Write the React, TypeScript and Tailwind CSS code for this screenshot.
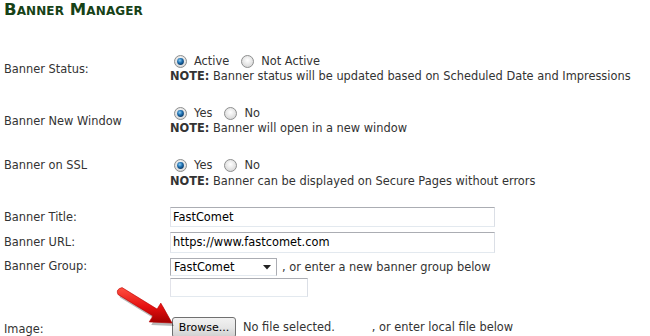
import React from "react";

function Radio({ checked }: { checked?: boolean }) {
  return (
    <svg width="13" height="13" viewBox="0 0 13 13" className="shrink-0">
      <defs>
        <radialGradient id="rbg" cx="50%" cy="40%" r="60%">
          <stop offset="0%" stopColor="#ffffff" />
          <stop offset="100%" stopColor="#d6d6d6" />
        </radialGradient>
        <radialGradient id="rdot" cx="40%" cy="35%" r="65%">
          <stop offset="0%" stopColor="#8fd0f5" />
          <stop offset="55%" stopColor="#1e6fb0" />
          <stop offset="100%" stopColor="#0b3d6b" />
        </radialGradient>
      </defs>
      <circle cx="6.5" cy="6.5" r="6" fill="url(#rbg)" stroke="#8e8f8f" strokeWidth="1" />
      {checked && <circle cx="6.5" cy="6.5" r="3.4" fill="url(#rdot)" />}
    </svg>
  );
}

function RadioRow({ a, b }: { a: string; b: string }) {
  return (
    <div className="flex items-center h-[15px] pl-[4px]">
      <Radio checked />
      <span className="ml-[7px]">{a}</span>
      <span className="ml-[12px]">
        <Radio />
      </span>
      <span className="ml-[7px]">{b}</span>
    </div>
  );
}

// red annotation arrow pointing at the Browse button
function Arrow() {
  return (
    <svg
      width="72"
      height="52"
      viewBox="0 0 72 52"
      className="absolute left-[112px] top-[281px] pointer-events-none"
    >
      <defs>
        <linearGradient id="ar" x1="0" y1="0" x2="0" y2="1">
          <stop offset="0%" stopColor="#ff5040" />
          <stop offset="55%" stopColor="#e41010" />
          <stop offset="100%" stopColor="#a00000" />
        </linearGradient>
      </defs>
      <path
        d="M10.1 6.6 L45.1 28.1 L48.8 22.1 L60 42 L37.2 40.9 L40.9 34.9 L5.9 13.4 Q3.5 8 10.1 6.6 Z"
        fill="#000"
        opacity="0.28"
        transform="translate(2 3)"
      />
      <path
        d="M10.1 6.6 L45.1 28.1 L48.8 22.1 L60 42 L37.2 40.9 L40.9 34.9 L5.9 13.4 Q3.5 8 10.1 6.6 Z"
        fill="url(#ar)"
        stroke="#b80000"
        strokeWidth="0.6"
        strokeLinejoin="round"
      />
    </svg>
  );
}

export default function App() {
  return (
    <div className="relative w-[650px] h-[336px] overflow-hidden bg-white text-[11.4px] leading-[15px] text-[#333] font-['DejaVu_Sans',Verdana,sans-serif]">
      {/* Header */}
      <h1 className="absolute left-[4px] top-[2px] text-[16.5px] font-bold text-[#174217] [font-variant:small-caps] tracking-[0.1px]">
        Banner Manager
      </h1>

      <div className="flex flex-col pt-[54px]">
        {/* Status */}
        <div className="flex items-center">
          <div className="w-[170px] pl-[4px] pt-[1px]">Banner Status:</div>
          <div>
            <RadioRow a="Active" b="Not Active" />
            <div>
              <b>NOTE:</b> Banner status will be updated based on Scheduled Date and Impressions
            </div>
          </div>
        </div>

        {/* New window */}
        <div className="flex items-center mt-[22px]">
          <div className="w-[170px] pl-[4px]">Banner New Window</div>
          <div>
            <RadioRow a="Yes" b="No" />
            <div>
              <b>NOTE:</b> Banner will open in a new window
            </div>
          </div>
        </div>

        {/* SSL */}
        <div className="flex items-start mt-[22px]">
          <div className="w-[170px] pl-[4px]">Banner on SSL</div>
          <div>
            <RadioRow a="Yes" b="No" />
            <div className="mt-[1px]">
              <b>NOTE:</b> Banner can be displayed on Secure Pages without errors
            </div>
          </div>
        </div>

        {/* Title */}
        <div className="flex items-center mt-[18px]">
          <div className="w-[170px] pl-[4px]">Banner Title:</div>
          <div className="w-[325px] h-[20px] border border-[#abadb3] border-b-[#e3e9ef] border-l-[#e2e3ea] border-r-[#dbdfe6] px-[2px] flex items-center text-black">
            FastComet
          </div>
        </div>

        {/* URL */}
        <div className="flex items-center mt-[5px]">
          <div className="w-[170px] pl-[4px]">Banner URL:</div>
          <div className="w-[325px] h-[21px] border border-[#abadb3] border-b-[#e3e9ef] border-l-[#e2e3ea] border-r-[#dbdfe6] px-[2px] flex items-center text-black">
            https://www.fastcomet.com
          </div>
        </div>

        {/* Group */}
        <div className="flex mt-[5px]">
          <div className="w-[170px] pl-[4px] pt-[1px]">Banner Group:</div>
          <div className="flex flex-col">
            <div className="flex items-center">
              <div className="w-[107px] h-[18px] border border-[#abadb3] border-b-[#e3e9ef] px-[3px] flex items-center justify-between text-black">
                <span>FastComet</span>
                <svg width="8" height="5" viewBox="0 0 8 5" className="mr-[2px]">
                  <path d="M0 0 H8 L4 4.5 Z" fill="#222" />
                </svg>
              </div>
              <span className="ml-[5px]">, or enter a new banner group below</span>
            </div>
            <div className="mt-[2px] w-[138px] h-[19px] border border-[#abadb3] border-b-[#e3e9ef] border-l-[#e2e3ea] border-r-[#dbdfe6]" />
          </div>
        </div>

        {/* Image */}
        <div className="flex items-center mt-[20px]">
          <div className="w-[172px] pl-[4px] pt-[3px]">Image:</div>
          <div className="w-[64px] h-[21px] rounded-[3px] border border-[#707070] bg-gradient-to-b from-[#f2f2f2] via-[#e6e6e6] to-[#cfcfcf] flex items-center justify-center text-black text-[11px]">
            Browse...
          </div>
          <span className="ml-[7px]">No file selected.</span>
          <span className="ml-[37px]">, or enter local file below</span>
        </div>
      </div>

      <Arrow />
    </div>
  );
}
